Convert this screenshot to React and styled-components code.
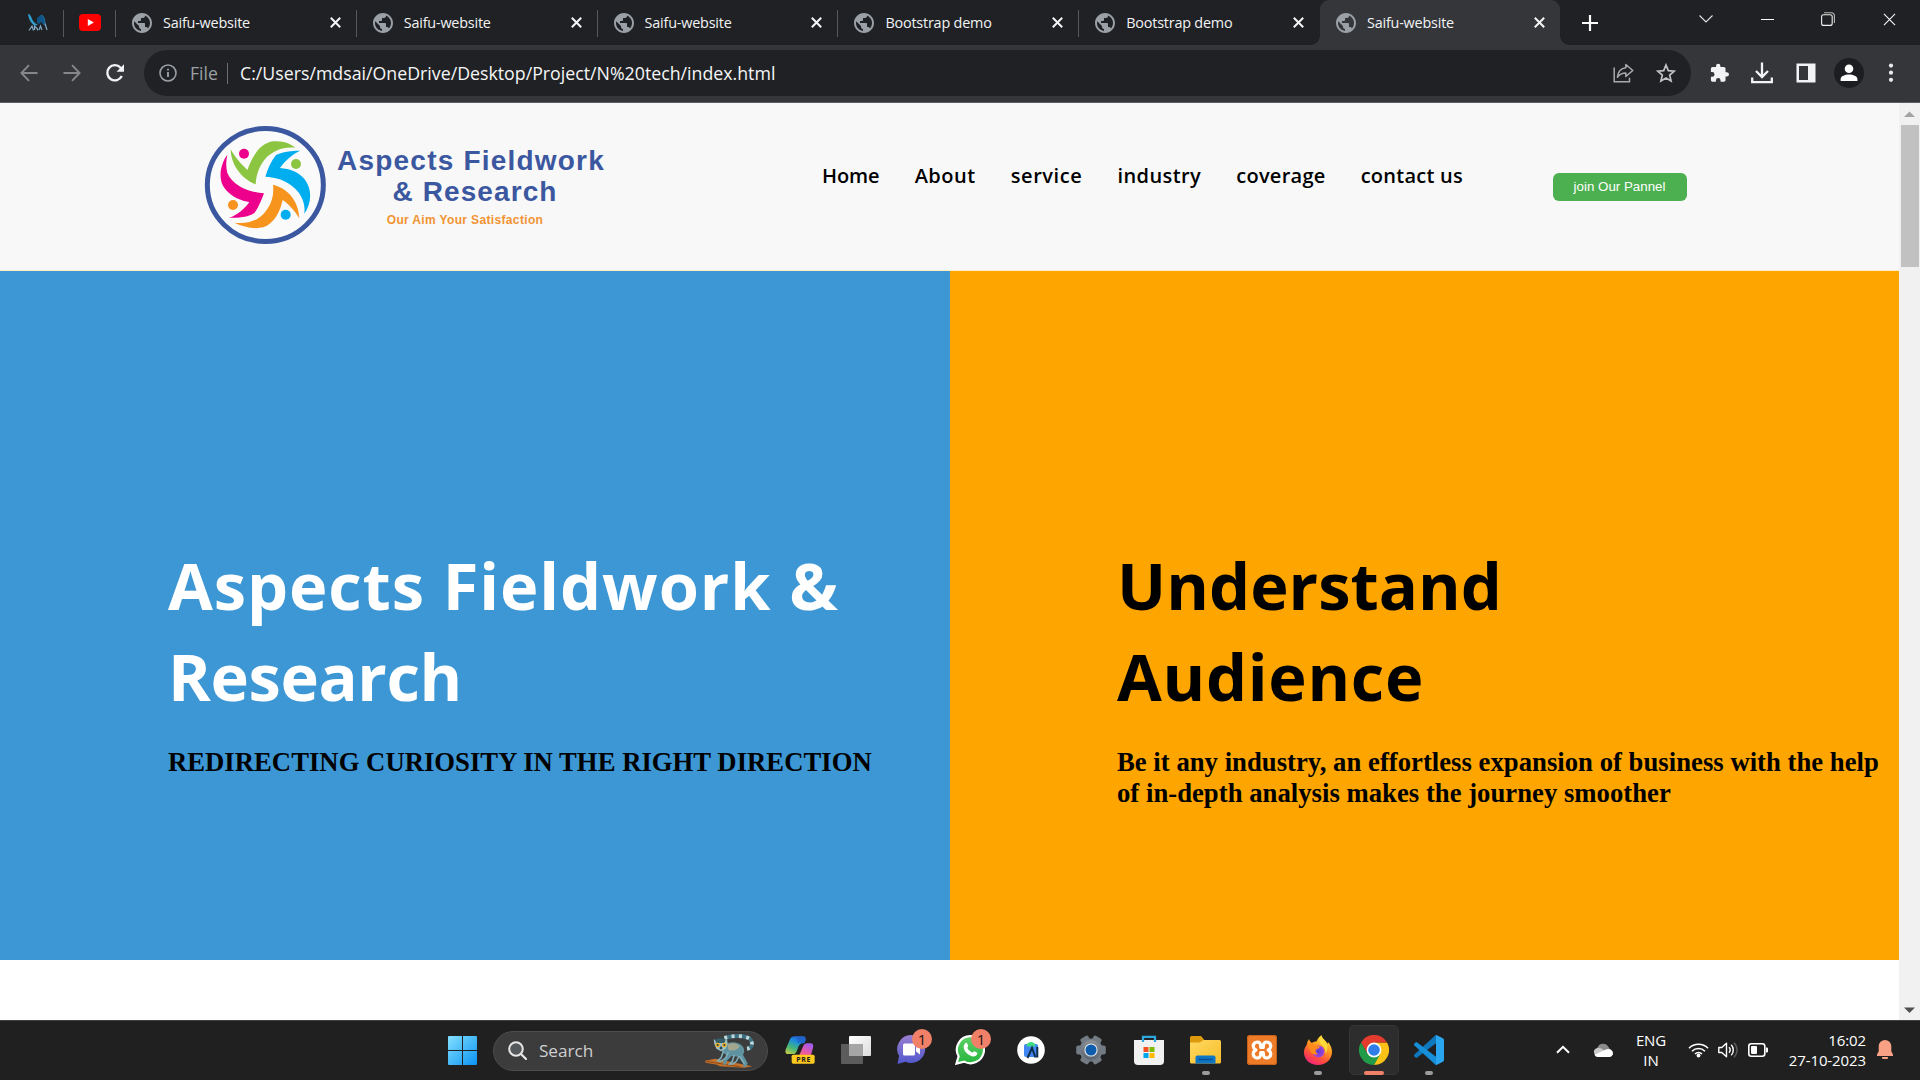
import React from "react";
import styled, { createGlobalStyle, css } from "styled-components";

const Global = createGlobalStyle`
  * { box-sizing: border-box; }
  body { margin: 0; overflow: hidden; background: #fff; }
  svg { display: block; flex: none; }
  h1, h2, p { margin: 0; }
`;

const ui = `"Open Sans", "Noto Sans", sans-serif`;

const Screen = styled.div`
  width: 1920px;
  height: 1080px;
  display: flex;
  flex-direction: column;
  overflow: hidden;
  font-family: ${ui};
`;

/* ---------- browser chrome ---------- */
const TabStrip = styled.div`
  height: 45px;
  flex: none;
  display: flex;
  background: #202124;
`;
const Pinned = styled.div`
  width: ${(p) => p.$w}px;
  padding-left: ${(p) => p.$pad}px;
  display: flex;
  align-items: center;
`;
const Divider = styled.i`
  width: 1px;
  height: 27px;
  margin-top: 10px;
  flex: none;
  background: #56585c;
  visibility: ${(p) => (p.$hidden ? "hidden" : "visible")};
`;
const Tab = styled.div`
  width: 239.8px;
  flex: none;
  display: flex;
  align-items: center;
  padding: 0 15px 0 16px;
  color: #f1f3f4;
  ${(p) =>
    p.$active &&
    css`
      position: relative;
      background: #35363a;
      border-radius: 9px 9px 0 0;
      &::before,
      &::after {
        content: "";
        position: absolute;
        bottom: 0;
        width: 9px;
        height: 9px;
      }
      &::before {
        left: -9px;
        background: radial-gradient(circle at 0 0, transparent 8.5px, #35363a 9px);
      }
      &::after {
        right: -9px;
        background: radial-gradient(circle at 100% 0, transparent 8.5px, #35363a 9px);
      }
    `}
`;
const TabTitle = styled.span`
  flex: 1;
  margin-left: 11px;
  font-size: 14.4px;
  line-height: 20px;
  letter-spacing: -0.2px;
  white-space: nowrap;
`;
const NewTab = styled.div`
  width: 60px;
  display: flex;
  align-items: center;
  justify-content: center;
`;
const WindowButtons = styled.div`
  margin-left: auto;
  padding: 0 0 7px;
  display: flex;
  align-items: center;
`;
const WindowButton = styled.div`
  width: 61.2px;
  display: flex;
  justify-content: center;
`;
const Toolbar = styled.div`
  height: 58px;
  flex: none;
  display: flex;
  align-items: center;
  background: #35363a;
  border-bottom: 1px solid #5d5e62;
  padding: 0 8px 1px 7px;
`;
const ToolButton = styled.div`
  width: ${(p) => p.$w || 43}px;
  flex: none;
  display: flex;
  justify-content: center;
`;
const Omnibox = styled.div`
  width: 1547px;
  height: 46px;
  flex: none;
  border-radius: 23px;
  background: #202124;
  display: flex;
  align-items: center;
  padding: 0 15px;
  margin: 0 6px 0 8px;
`;
const OmniboxActions = styled.div`
  display: flex;
  align-items: center;
  gap: 22px;
`;
const Scheme = styled.span`
  width: 37px;
  margin-left: 13px;
  font-size: 17.6px;
  color: #9aa0a6;
  line-height: 24px;
`;
const BarLine = styled.i`
  width: 1px;
  height: 21px;
  background: #6b6e72;
`;
const Url = styled.span`
  flex: 1;
  margin-left: 12px;
  font-size: 17.75px;
  line-height: 24px;
  color: #f5f6f7;
`;
const Avatar = styled.div`
  width: 30px;
  height: 30px;
  border-radius: 50%;
  background: #1c1d20;
  display: flex;
  align-items: center;
  justify-content: center;
`;

/* ---------- page ---------- */
const Viewport = styled.div`
  height: 917px;
  flex: none;
  display: flex;
`;
const Page = styled.main`
  width: 1899px;
  background: #fff;
`;
const SiteHeader = styled.header`
  height: 168px;
  display: flex;
  align-items: center;
  background: #f8f8f8;
  border-bottom: 1px solid #fdecc4;
  padding-left: 195px;
`;
const LogoMark = styled.div`
  margin-bottom: 4px;
`;
const LogoText = styled.div`
  width: 272px;
  display: flex;
  flex-direction: column;
  align-items: center;
  white-space: nowrap;
  font-family: "Liberation Sans", Arial, sans-serif;
  font-weight: 700;
  color: #3b57a0;
`;
const LogoLine = styled.div`
  font-size: 28px;
  line-height: 31px;
  letter-spacing: ${(p) => p.$ls}px;
  padding-left: ${(p) => p.$shift || 0}px;
`;
const Tagline = styled.div`
  margin: 6px 12px 0 0;
  font-size: 12px;
  line-height: 15px;
  letter-spacing: 0.35px;
  color: #f29332;
`;
const Nav = styled.nav`
  display: flex;
  gap: 35.2px;
  margin-left: 215px;
  margin-bottom: 22px;
`;
const NavItem = styled.a`
  font-size: 20px;
  font-weight: 600;
  line-height: 27px;
  letter-spacing: ${(p) => p.$ls}px;
  color: #000;
  white-space: nowrap;
`;
const JoinButton = styled.button`
  width: 134px;
  height: 28px;
  margin-left: 89.5px;
  padding: 0;
  border: 0;
  border-radius: 6px;
  background: #4caf50;
  color: #fff;
  font: 13.33px "Liberation Sans", Arial, sans-serif;
`;
const Hero = styled.section`
  height: 689px;
  display: flex;
`;
const Panel = styled.div`
  width: ${(p) => p.$w}px;
  padding: 269px 10px 0 ${(p) => p.$pad}px;
  background: ${(p) => p.$bg};
`;
const Headline = styled.h1`
  font-size: 65px;
  font-weight: 700;
  line-height: 91px;
  color: ${(p) => p.$color};
`;
const HeadLine = styled.span`
  display: block;
  white-space: nowrap;
  letter-spacing: ${(p) => p.$ls}px;
`;
const Sub = styled.h2`
  margin-top: 25px;
  font: 700 26.67px/31px "Liberation Serif", "Times New Roman", serif;
  letter-spacing: 0.03px;
  color: #000;
`;
const Scrollbar = styled.aside`
  width: 21px;
  background: #f1f1f1;
  display: flex;
  flex-direction: column;
  align-items: center;
  padding: 8px 0 7px;
`;
const Thumb = styled.div`
  width: 18px;
  height: 142px;
  margin-top: 8px;
  margin-bottom: auto;
  background: #c1c1c1;
`;

/* ---------- taskbar ---------- */
const Taskbar = styled.footer`
  height: 60px;
  flex: none;
  background: #202020;
  border-top: 1px solid #3d4140;
  display: flex;
  align-items: center;
  padding: 0 27px 0 434px;
`;
const Start = styled.div`
  width: 59px;
  padding-left: 14px;
`;
const SearchBox = styled.div`
  width: 275px;
  height: 40px;
  border-radius: 20px;
  background: #3c3c3c;
  border: 1px solid #4c4c4c;
  display: flex;
  align-items: center;
  padding: 0 12px 0 14px;
  margin-right: 3px;
`;
const SearchLabel = styled.span`
  flex: 1;
  margin-left: 12px;
  font-size: 17.2px;
  letter-spacing: -0.05px;
  line-height: 22px;
  color: #cfcfcf;
`;
const TaskApp = styled.div`
  width: ${(p) => p.$w || 56}px;
  height: 59px;
  margin-bottom: 2px;
  flex: none;
  position: relative;
  display: flex;
  align-items: center;
  justify-content: center;
`;
const ActiveTile = styled.div`
  width: 50px;
  height: 50px;
  border-radius: 5px;
  background: #2d2d2d;
  border: 1px solid #353535;
  display: flex;
  align-items: center;
  justify-content: center;
`;
const Indicator = styled.i`
  position: absolute;
  bottom: 4px;
  left: 50%;
  width: ${(p) => (p.$active ? 20 : 8)}px;
  height: 4px;
  transform: translateX(-50%);
  border-radius: 2px;
  background: ${(p) => (p.$active ? "#f08068" : "#9b9b9b")};
`;
const Badge = styled.b`
  position: absolute;
  top: 9px;
  left: 50%;
  margin-left: 1px;
  width: 20px;
  height: 20px;
  border-radius: 50%;
  background: #f08068;
  color: #1c1413;
  font-size: 15px;
  font-weight: 400;
  line-height: 20px;
  text-align: center;
`;
const Tray = styled.div`
  margin-left: auto;
  margin-bottom: 2px;
  display: flex;
  align-items: center;
  color: #fff;
`;
const TrayText = styled.div`
  width: ${(p) => p.$w}px;
  margin-left: ${(p) => p.$ml}px;
  font-size: 15px;
  letter-spacing: -0.1px;
  line-height: 20px;
  text-align: ${(p) => p.$align};
  white-space: nowrap;
`;
const TrayIcon = styled.div`
  margin-left: ${(p) => p.$ml || 0}px;
`;

/* ---------- drawings ---------- */
const Globe = () => (
  <svg width="20" height="20" viewBox="2 2 20 20">
    <path d="M12 2C6.48 2 2 6.48 2 12s4.480 10 10 10 10-4.480 10-10S17.520 2 12 2zm-1 17.930c-3.950-.49-7-3.850-7-7.930 0-.62.080-1.210.210-1.790L9 15v1c0 1.100.9 2 2 2v1.930zm6.900-2.540c-.26-.81-1-1.390-1.900-1.390h-1v-3c0-.55-.45-1-1-1H8v-2h2c.55 0 1-.45 1-1V7h2c1.100 0 2-.9 2-2v-.41c2.930 1.190 5 4.060 5 7.410 0 2.080-.8 3.970-2.100 5.390z" fill="#9aa0a6" />
  </svg>
);
const Close = ({ s = 11, w = 2 }) => (
  <svg width={s} height={s} viewBox="0 0 11 11">
    <path d="M.8.8l9.400 9.400M10.200.8L.8 10.200" stroke="#f5f5f5" strokeWidth={w} />
  </svg>
);
const PinnedArt = () => (
  <svg width="20" height="17" viewBox="0 0 20 17">
    <path d="M0 0c2 0 3 2 4 5 1.500 3 3 4.500 6 6l-3 .5C3 9.500 1 6 0 0z" fill="#2f9fd0" />
    <path d="M9 4l4-3 3 3 .5 8-3.500-4-2 2-2-1z" fill="#0f5488" />
    <path d="M13 1c3 1 4 5 4 10" fill="none" stroke="#1b6ea5" strokeWidth="1.200" />
    <path d="M1 16.500l3-4.500 1.500 4.500M6.500 16v-4l3 3v1.500M11 16l1.500-4 1.500 4M17 9.500l2 6.500" stroke="#7fa9c4" strokeWidth="1.200" fill="none" />
  </svg>
);
const YouTube = () => (
  <svg width="22" height="17" viewBox="0 0 22 17">
    <rect width="22" height="17" rx="4" fill="#f00" />
    <path d="M8.800 4.900v7.200l6-3.600z" fill="#fff" />
  </svg>
);
const Arrow = ({ flip }) => (
  <svg width="18" height="18" viewBox="0 0 18 18">
    <path
      d={flip ? "M.5 9h16M9 1.200L16.600 9 9 16.800" : "M17.500 9h-16M9 1.200L1.400 9 9 16.800"}
      fill="none" stroke="#85878a" strokeWidth="1.900"
    />
  </svg>
);
const Reload = () => (
  <svg width="20" height="20" viewBox="0 0 20 20">
    <path d="M16.800 13A7.600 7.600 0 1 1 15.600 4.700L17.500 6.800" fill="none" stroke="#f1f3f4" strokeWidth="2.400" />
    <path d="M19 1.300v7.500h-7.500z" fill="#f1f3f4" />
  </svg>
);
const Info = () => (
  <svg width="18" height="18" viewBox="0 0 18 18">
    <circle cx="9" cy="9" r="8" fill="none" stroke="#9aa0a6" strokeWidth="1.600" />
    <path d="M9 8v5M9 4.700v1.900" stroke="#9aa0a6" strokeWidth="1.900" />
  </svg>
);
const Share = () => (
  <svg width="21" height="20" viewBox="0 0 21 20">
    <path d="M1.200 4.500v14.300h15.300v-4" fill="none" stroke="#a7a9ac" strokeWidth="1.500" />
    <path d="M12.800 1.500l7 6-7 5.900V10C9 10 6.500 11.200 4.400 14.200 5 9 8 5.400 12.800 4.800z" fill="none" stroke="#a7a9ac" strokeWidth="1.500" strokeLinejoin="round" />
  </svg>
);
const Star = () => (
  <svg width="20" height="20" viewBox="0 0 20 20">
    <path d="M10 2l2.300 5.600 6 .5-4.600 4 1.400 5.900L10 14.900 4.900 18l1.400-5.900-4.600-4 6-.5z" fill="none" stroke="#c0c2c5" strokeWidth="1.700" />
  </svg>
);
const Puzzle = () => (
  <svg width="24" height="24" viewBox="0 0 24 24">
    <path d="M20.500 11H19V7c0-1.100-.9-2-2-2h-4V3.500a2.500 2.500 0 0 0-5 0V5H4c-1.100 0-2 .9-2 2v3.800h1.500a2.700 2.700 0 0 1 0 5.400H2V20c0 1.100.9 2 2 2h3.800v-1.500a2.700 2.700 0 0 1 5.400 0V22H17c1.100 0 2-.9 2-2v-4h1.500a2.500 2.500 0 0 0 0-5z" fill="#f1f3f4" transform="translate(2.200 1.800) scale(.86)" />
  </svg>
);
const Download = () => (
  <svg width="22" height="22" viewBox="0 0 22 22">
    <path d="M11 .5v14M5 9l6 6 6-6" fill="none" stroke="#f1f3f4" strokeWidth="2.300" />
    <path d="M1.200 15.500v4.700h19.600v-4.700" fill="none" stroke="#f1f3f4" strokeWidth="2.300" />
  </svg>
);
const SidePanel = () => (
  <svg width="20" height="20" viewBox="0 0 20 20">
    <path d="M.5.500h19v19H.5zM3 3v14h9V3z" fill="#f1f3f4" fillRule="evenodd" />
  </svg>
);
const Person = () => (
  <svg width="18" height="18" viewBox="0 0 18 18">
    <circle cx="9" cy="4.800" r="4.300" fill="#fff" />
    <path d="M.6 17v-2c0-3 4.500-4.500 8.400-4.500s8.400 1.500 8.400 4.500v2z" fill="#fff" />
  </svg>
);
const Dots = () => (
  <svg width="6" height="20" viewBox="0 0 6 20">
    {[2.6, 9.7, 16.8].map((y) => <circle key={y} cx="3" cy={y} r="2.100" fill="#e8eaed" />)}
  </svg>
);
const Caret = ({ down }) => (
  <svg width="11" height="6" viewBox="0 0 11 6">
    <path d={down ? "M0 .5h11L5.500 6z" : "M0 6h11L5.500.500z"} fill={down ? "#505050" : "#a3a3a3"} />
  </svg>
);
const Emblem = () => (
  <svg width="140" height="134" viewBox="0 0 420 402">
    <ellipse cx="211" cy="201" rx="174" ry="169.500" fill="#fafafb" stroke="#3b57a0" strokeWidth="15" />
    <path fill="#8cc541" d="M107 94C120 118 140 140 157 156C172 115 195 75 235 70C262 67 285 76 302 89C265 85 235 98 215 118C195 140 184 165 182 199C150 188 108 150 107 94Z" />
    <path fill="#00aeef" d="M315 98C290 98 262 101 243 111C228 130 217 155 211 176C255 178 290 195 312 225C325 245 331 265 328 287C350 255 352 215 330 185C312 162 285 152 255 150C270 128 290 110 315 98Z" />
    <path fill="#ec008c" d="M97 110C75 140 68 185 90 212C110 238 140 248 163 252C150 272 128 290 102 300C130 299 160 298 178 285C190 270 200 245 207 226C160 222 115 205 97 165C92 145 93 128 97 110Z" />
    <path fill="#f7941e" d="M234 200C275 210 311 245 313 301C297 275 280 258 263 246C255 280 240 315 205 328C175 335 145 326 118 314C150 318 180 312 203 290C228 265 238 235 234 200Z" />
    <circle cx="147" cy="107" r="15" fill="#ec008c" />
    <circle cx="303" cy="138" r="15" fill="#8cc541" />
    <circle cx="114" cy="261" r="15" fill="#f7941e" />
    <circle cx="272" cy="290" r="15" fill="#00aeef" />
  </svg>
);
const WindowsLogo = () => (
  <svg width="29" height="29" viewBox="0 0 29 29">
    <defs>
      <linearGradient id="win" x1="0" y1="0" x2="1" y2="1"><stop stopColor="#84e0ff" /><stop offset="1" stopColor="#0a93f2" /></linearGradient>
    </defs>
    <path d="M1 0h13v14H0V1a1 1 0 0 1 1-1zM15 0h13a1 1 0 0 1 1 1v13H15zM0 15h14v14H1a1 1 0 0 1-1-1zM15 15h14v13a1 1 0 0 1-1 1H15z" fill="url(#win)" />
  </svg>
);
const SearchGlyph = () => (
  <svg width="19" height="19" viewBox="0 0 19 19">
    <circle cx="8" cy="8" r="6.800" fill="#55595b" stroke="#e6e6e6" strokeWidth="2" />
    <path d="M13 13l5 5" stroke="#e6e6e6" strokeWidth="2.300" strokeLinecap="round" />
  </svg>
);
const Lemur = () => (
  <svg width="50" height="34" viewBox="0 0 150 102">
    <path d="M0 80L30 74 142 97 120 101 78 99 44 97 36 92 2 86z" fill="#c4712a" />
    <path d="M4 82l60 10 40 6" stroke="#8e4a17" strokeWidth="3" fill="none" />
    <path d="M58 12C85 4 118 4 134 14c12 12 8 28-8 30" fill="none" stroke="#3d7080" strokeWidth="12" />
    <path d="M58 12C85 4 118 4 134 14c12 12 8 28-8 30" fill="none" stroke="#c2d8da" strokeWidth="11" strokeDasharray="9 13" />
    <path d="M56 34C70 22 98 20 112 36c8 10 6 20 2 26l14 26-4 10h-10l2-8-16-22-20-2-14 14-4 12H54l2-10 8-18-14-12z" fill="#5f93a1" />
    <path d="M68 32c16-8 30-4 36 6-10 12-22 14-34 10z" fill="#a4a68e" />
    <path d="M56 50l-8 22-10 8 10 2 14-10 8-18M88 62L82 82l-8 8h10l10-8 8-16M104 66l14 24" stroke="#7facb6" strokeWidth="5" fill="none" />
    <path d="M26 16l8 4c8-3 16-3 24 0l8-6 2 16-6 14-14 8-14-8-6-14z" fill="#9fc0c3" />
    <path d="M30 17c10-6 22-6 32 0l-4 10H34z" fill="#345c69" />
    <circle cx="38" cy="33" r="7" fill="#e9b227" /><circle cx="58" cy="33" r="7" fill="#e9b227" />
    <circle cx="38" cy="33" r="3" fill="#303c3f" /><circle cx="58" cy="33" r="3" fill="#303c3f" />
    <path d="M43 42l5-6 5 6-5 5z" fill="#27454f" />
  </svg>
);
const Copilot = () => (
  <svg width="30" height="28" viewBox="0 0 90 84">
    <defs>
      <linearGradient id="cpA" x1="0" y1="1" x2=".5" y2="0"><stop stopColor="#d9cf3f" /><stop offset=".4" stopColor="#46b878" /><stop offset=".8" stopColor="#1a8be0" /><stop offset="1" stopColor="#2a64d8" /></linearGradient>
      <linearGradient id="cpB" x1="0" y1="1" x2=".6" y2="0"><stop stopColor="#f2685f" /><stop offset=".5" stopColor="#e858a8" /><stop offset="1" stopColor="#a45be8" /></linearGradient>
    </defs>
    <path d="M14 12C17 4 22 1 32 1h22c6 0 9 5 8 11l-4 10c-12-2-16 4-20 16-4 14-8 16-16 16H10C0 54 0 46 3 38z" fill="url(#cpA)" />
    <path d="M34 1h20c6 0 9 5 8 12l-4 8H38z" fill="#1c62c4" opacity=".65" />
    <path d="M76 22c8 0 10 6 8 14L76 64H40l14-32c3-7 7-10 13-10z" fill="url(#cpB)" />
    <rect x="20" y="56" width="69" height="27" rx="5" fill="#ffc91f" />
    <text x="56" y="77" fontSize="21" fontWeight="700" letterSpacing="2" textAnchor="middle" fontFamily="Open Sans, sans-serif" fill="#1b1b1b">PRE</text>
  </svg>
);
const TaskView = () => (
  <svg width="30" height="28" viewBox="0 0 30 28">
    <defs><linearGradient id="tv" x1="0" y1="0" x2="1" y2="1"><stop stopColor="#fff" /><stop offset="1" stopColor="#dcdcdc" /></linearGradient></defs>
    <rect x="0" y="8" width="22" height="20" rx="1" fill="#5c5c5c" />
    <rect x="8" y="0" width="22" height="20" rx="1" fill="url(#tv)" />
    <path d="M8 8h14v12H8z" fill="#a5a5a5" />
  </svg>
);
const Chat = () => (
  <svg width="29" height="29" viewBox="0 0 29 29">
    <defs><linearGradient id="ch" x1="0" y1="0" x2="0" y2="1"><stop stopColor="#9a7fd0" /><stop offset="1" stopColor="#5158cc" /></linearGradient></defs>
    <path d="M14.500 0a14 14 0 1 1-6 26.800L.5 29l1.600-8A14 14 0 0 1 14.500 0z" fill="url(#ch)" />
    <rect x="6" y="8.500" width="12" height="12" rx="1.500" fill="#fff" />
    <path d="M19 12.500l4-3v10l-4-3z" fill="#fff" />
  </svg>
);
const WhatsApp = () => (
  <svg width="30" height="30" viewBox="0 0 30 30">
    <defs><linearGradient id="wa" x1="0" y1="0" x2="0" y2="1"><stop stopColor="#5fd168" /><stop offset="1" stopColor="#25b43e" /></linearGradient></defs>
    <path d="M15.500 1.200a13.500 13.500 0 1 1-6.400 25.400L1.500 28.600l2.100-7.300A13.500 13.500 0 0 1 15.500 1.200z" fill="url(#wa)" stroke="#fff" strokeWidth="2.200" />
    <path d="M10.200 8.200c.8-.8 1.600-.5 2 .3l1 2.300c.3.700-1 1.800-.8 2.300 1 2 2.600 3.500 4.700 4.400.7.200 1.600-1.600 2.300-1.300l2.400 1.200c.7.400.7 1.200.2 2.100-1 1.700-3 2.300-5 1.700-4.300-1.300-7-4-8.100-7.400-.6-2 0-4.200 1.300-5.600z" fill="#fff" />
  </svg>
);
const AndroidStudio = () => (
  <svg width="28" height="28" viewBox="0 0 28 28">
    <circle cx="14" cy="14" r="13.800" fill="#fff" />
    <rect x="7" y="8" width="14" height="13" rx="2" fill="#4285f4" />
    <path d="M9.500 10.500a4.500 4.500 0 0 1 9 0z" fill="#3ddc84" />
    <path d="M10.500 22l4.500-10 3.500 9.500M20.300 11v10.500" stroke="#0e2f4a" strokeWidth="2" fill="none" />
  </svg>
);
const Gear = () => (
  <svg width="30" height="30" viewBox="0 0 30 30">
    <defs><linearGradient id="gr" x1="0" y1="0" x2="0" y2="1"><stop stopColor="#8b9095" /><stop offset="1" stopColor="#5b6470" /></linearGradient></defs>
    <circle cx="15" cy="15" r="11.600" fill="#737b84" />
    {[0, 60, 120].map((a) => <rect key={a} x="10.500" y=".2" width="9" height="29.600" rx="2" fill="#737b84" transform={`rotate(${a + 30} 15 15)`} />)}
    <circle cx="15" cy="15" r="10" fill="url(#gr)" />
    <circle cx="15" cy="15" r="6.600" fill="#e2e6ea" />
    <circle cx="15" cy="15" r="5.500" fill="#0d5cad" />
  </svg>
);
const Store = () => (
  <svg width="30" height="30" viewBox="0 0 30 30">
    <path d="M9 7V1.800h12V7" fill="none" stroke="#2ea7df" strokeWidth="2.300" />
    <path d="M0 5h30v21a4 4 0 0 1-4 4H4a4 4 0 0 1-4-4z" fill="#f1f1f1" />
    <path d="M9 7V5M21 7V5" stroke="#2ea7df" strokeWidth="2.300" />
    <path d="M9.500 12h5v5h-5z" fill="#f25022" /><path d="M15.500 12h5v5h-5z" fill="#7fba00" />
    <path d="M9.500 18h5v5h-5z" fill="#00a4ef" /><path d="M15.500 18h5v5h-5z" fill="#ffb900" />
  </svg>
);
const Explorer = () => (
  <svg width="31" height="28" viewBox="0 0 31 28">
    <defs><linearGradient id="fx" x1="0" y1="0" x2="1" y2="1"><stop stopColor="#ffd960" /><stop offset="1" stopColor="#f7bd2c" /></linearGradient></defs>
    <path d="M1.500 0H11l3 3.500V10H0V1.500A1.500 1.500 0 0 1 1.500 0z" fill="#dd9a0c" />
    <path d="M0 6.500h10L13.500 4h16A1.500 1.500 0 0 1 31 5.500V26a1.500 1.500 0 0 1-1.500 1.500h-28A1.500 1.500 0 0 1 0 26z" fill="url(#fx)" />
    <path d="M5.500 27.500v-6a2 2 0 0 1 2-2h16a2 2 0 0 1 2 2v6z" fill="#0f76c6" />
    <path d="M9 23.500h13" stroke="#0a4f91" strokeWidth="1.500" strokeLinecap="round" />
  </svg>
);
const Xampp = () => (
  <svg width="30" height="30" viewBox="0 0 30 30">
    <rect width="30" height="30" rx="3" fill="#ed7b28" />
    <rect x=".5" y=".5" width="29" height="29" rx="3" fill="none" stroke="#c45f18" />
    <path d="M8.500 7.500c3.600-1.600 5.500 1 5.200 5h2.600c-.3-4 1.600-6.600 5.200-5 3.500 1.800 2.500 6-.3 7.500 2.800 1.500 3.800 5.700.3 7.500-3.600 1.600-5.500-1-5.200-5h-2.600c.3 4-1.600 6.600-5.200 5C5 20.700 6 16.500 8.800 15 6 13.500 5 9.300 8.500 7.500z" fill="none" stroke="#fff" strokeWidth="3.200" strokeLinejoin="round" />
  </svg>
);
const Firefox = () => (
  <svg width="28" height="30" viewBox="0 0 28 30">
    <defs>
      <linearGradient id="ff" x1=".8" y1="0" x2=".3" y2="1"><stop stopColor="#fff04a" /><stop offset=".4" stopColor="#ff9d1c" /><stop offset=".75" stopColor="#ff4a40" /><stop offset="1" stopColor="#f0247a" /></linearGradient>
      <radialGradient id="fp"><stop stopColor="#5a3bd0" /><stop offset="1" stopColor="#a845d8" /></radialGradient>
    </defs>
    <path d="M5 4c.5 2 1.500 3.300 3 4 1-1 2.500-1.500 4.500-1.500C13.500 4 15 2 17.500.300 17.800 4 22 5 23.500 9l.5-2c3 3.500 4 7 4 10 0 7-6 13-14 13S0 24.500 0 17.500C0 13 2.500 11 3 9c.2-2 1-3.500 2-5z" fill="url(#ff)" />
    <circle cx="14.500" cy="16.500" r="6" fill="url(#fp)" />
    <path d="M4 10c3-2 6-1 7.500.5 1 .8 3 .8 4.500 1-.5 2-3 2-4 3-1 1.800 0 3.500 2 4.500-3 1.500-7 0-8-3.500" fill="#ff8a1c" />
    <path d="M17.500.300C17.800 4 22 5 23 10c1 4 0 6.500-1.500 8.500.5-5-2-7-4.500-9-2-2-2.500-6 .5-9.200z" fill="#ffd83a" />
  </svg>
);
const Chrome = () => (
  <svg width="30" height="30" viewBox="0 0 30 30">
    <path d="M15 15h7L15 30A15 15 0 0 0 28 7.500H15z" fill="#fbc116" />
    <path d="M2 7.500A15 15 0 0 1 28 7.500H15L8.500 18.700z" fill="#e33b2e" />
    <path d="M2 7.500l6.500 11.200L15 22.500l6.500-3.800L15 30A15 15 0 0 1 2 7.500z" fill="#229b48" />
    <circle cx="15" cy="15" r="7.400" fill="#fff" />
    <circle cx="15" cy="15" r="5.800" fill="#2f7de9" />
  </svg>
);
const VSCode = () => (
  <svg width="30" height="30" viewBox="0 0 30 30">
    <path d="M22 8.300L3.200 22.600a1.300 1.300 0 0 1-1.600 0L.4 21.400a1.200 1.200 0 0 1 0-1.800L20.300 1.200A2.500 2.500 0 0 1 22 .4z" fill="#0f77bb" />
    <path d="M22 21.700L3.200 7.400a1.300 1.300 0 0 0-1.600 0L.4 8.600a1.200 1.200 0 0 0 0 1.800L20.300 28.800a2.500 2.500 0 0 0 1.700.8z" fill="#168fd8" />
    <path d="M21.300.300c.5-.3 1-.3 1.600 0l6 2.900A2 2 0 0 1 30 5v20a2 2 0 0 1-1.100 1.800l-6 2.900c-.6.3-1.100.3-1.600 0 .5-.3.700-.8.7-1.400V1.700c0-.6-.2-1.100-.7-1.400z" fill="#2aa5f0" />
  </svg>
);
const TrayChevron = () => (
  <svg width="14" height="9" viewBox="0 0 14 9"><path d="M1 7.800l6-6 6 6" fill="none" stroke="#fff" strokeWidth="2" /></svg>
);
const Cloud = () => (
  <svg width="20" height="14" viewBox="0 0 20 14">
    <path d="M4.500 4.500A6 6 0 0 1 15.500 4L18 8 4 10z" fill="#8b8b8b" />
    <path d="M3 5.500c3-1.500 5-.5 8 2L5 13a4 4 0 0 1-2-7.500z" fill="#c9c9c9" />
    <path d="M2 11.500L13 6.500c3-1.500 7 0 7 3.800 0 2-1.500 3.700-3.500 3.700h-12C3 14 2 13 1.500 11.500z" fill="#fff" />
  </svg>
);
const Wifi = () => (
  <svg width="21" height="16" viewBox="0 0 21 16">
    <path d="M1 6.200a13.500 13.500 0 0 1 19 0M4 9.200a9.300 9.300 0 0 1 13 0M7 12a5 5 0 0 1 7 0" fill="none" stroke="#fff" strokeWidth="1.600" />
    <circle cx="10.500" cy="13.500" r="1.900" fill="#fff" />
  </svg>
);
const Speaker = () => (
  <svg width="20" height="16" viewBox="0 0 20 16">
    <path d="M.8 5.500h3L8.500 1.300v13.400L3.800 10.500h-3z" fill="none" stroke="#fff" strokeWidth="1.400" strokeLinejoin="round" />
    <path d="M11 5.300a4 4 0 0 1 0 5.400M13.200 2.800a7.500 7.500 0 0 1 0 10.400" fill="none" stroke="#fff" strokeWidth="1.400" />
    <path d="M16 .8c4 4 4 10.400 0 14.400" fill="none" stroke="#5c5c5c" strokeWidth="1.400" />
  </svg>
);
const Battery = () => (
  <svg width="20" height="14" viewBox="0 0 20 14">
    <rect x=".8" y=".8" width="16" height="12.400" rx="2.500" fill="none" stroke="#fff" strokeWidth="1.600" />
    <rect x="3" y="3" width="6" height="8" rx="1" fill="#fff" />
    <path d="M18 4.500h1a1 1 0 0 1 1 1v3a1 1 0 0 1-1 1h-1z" fill="#fff" />
  </svg>
);
const Bell = () => (
  <svg width="16" height="19" viewBox="0 0 16 19">
    <path d="M8 0a6.300 6.300 0 0 1 6.300 6.300v5L16 14.600V16H0v-1.400l1.700-3.300v-5A6.300 6.300 0 0 1 8 0zM5 17h6a3 3 0 0 1-6 0z" fill="#f9a184" />
  </svg>
);

const tabs = ["Saifu-website", "Saifu-website", "Saifu-website", "Bootstrap demo", "Bootstrap demo", "Saifu-website"];
const nav = [["Home", -0.1], ["About", 0.5], ["service", 0.55], ["industry", 0.4], ["coverage", 0.25], ["contact us", 0.25]];
const apps = [
  { Icon: Copilot, w: 57 },
  { Icon: TaskView, w: 55 },
  { Icon: Chat, w: 56, badge: 1 },
  { Icon: WhatsApp, w: 62, badge: 1 },
  { Icon: AndroidStudio, w: 60 },
  { Icon: Gear, w: 60 },
  { Icon: Store },
  { Icon: Explorer, w: 57, open: true },
  { Icon: Xampp },
  { Icon: Firefox, open: true },
  { Icon: Chrome, open: true, active: true },
  { Icon: VSCode, w: 54, open: true },
];

export default function App() {
  return (
    <Screen>
      <Global />
      <TabStrip>
        <Pinned $w={63} $pad={28}><PinnedArt /></Pinned>
        <Divider />
        <Pinned $w={51} $pad={15}><YouTube /></Pinned>
        {tabs.map((title, i) => (
          <React.Fragment key={i}>
            <Divider $hidden={i === 5} />
            <Tab $active={i === 5}>
              <Globe />
              <TabTitle>{title}</TabTitle>
              <Close />
            </Tab>
          </React.Fragment>
        ))}
        <NewTab>
          <svg width="16" height="16" viewBox="0 0 16 16"><path d="M8 0v16M0 8h16" stroke="#fff" strokeWidth="2.200" /></svg>
        </NewTab>
        <WindowButtons>
          <WindowButton>
            <svg width="14" height="8" viewBox="0 0 14 8"><path d="M.5.500L7 7 13.500.500" fill="none" stroke="#e4e4e4" strokeWidth="1.100" /></svg>
          </WindowButton>
          <WindowButton>
            <svg width="13" height="2" viewBox="0 0 13 2"><path d="M0 1.500h13" stroke="#fff" /></svg>
          </WindowButton>
          <WindowButton>
            <svg width="14" height="14" viewBox="0 0 14 14"><rect x=".6" y="2.800" width="10.600" height="10.600" rx="2" fill="none" stroke="#eee" strokeWidth="1.100" /><path d="M3 .7h7.500a2.900 2.900 0 0 1 2.900 2.900V11" fill="none" stroke="#bbb" strokeWidth="1.100" /></svg>
          </WindowButton>
          <WindowButton><Close s={13} w={0.95} /></WindowButton>
        </WindowButtons>
      </TabStrip>
      <Toolbar>
        <ToolButton><Arrow /></ToolButton>
        <ToolButton><Arrow flip /></ToolButton>
        <ToolButton><Reload /></ToolButton>
        <Omnibox>
          <Info />
          <Scheme>File</Scheme>
          <BarLine />
          <Url>C:/Users/mdsai/OneDrive/Desktop/Project/N%20tech/index.html</Url>
          <OmniboxActions>
            <Share />
            <Star />
          </OmniboxActions>
        </Omnibox>
        <ToolButton><Puzzle /></ToolButton>
        <ToolButton $w={44}><Download /></ToolButton>
        <ToolButton><SidePanel /></ToolButton>
        <ToolButton><Avatar><Person /></Avatar></ToolButton>
        <ToolButton $w={42}><Dots /></ToolButton>
      </Toolbar>
      <Viewport>
        <Page>
          <SiteHeader>
            <LogoMark><Emblem /></LogoMark>
            <LogoText>
              <LogoLine $ls={1.2}>Aspects Fieldwork</LogoLine>
              <LogoLine $ls={1.1} $shift={8}>&amp; Research</LogoLine>
              <Tagline>Our Aim Your Satisfaction</Tagline>
            </LogoText>
            <Nav>
              {nav.map(([label, ls]) => <NavItem key={label} $ls={ls}>{label}</NavItem>)}
            </Nav>
            <JoinButton>join Our Pannel</JoinButton>
          </SiteHeader>
          <Hero>
            <Panel $w={950} $pad={168} $bg="#3c97d4">
              <Headline $color="#fff">
                <HeadLine $ls={0.9}>Aspects Fieldwork &amp;</HeadLine>
                <HeadLine $ls={-0.4}>Research</HeadLine>
              </Headline>
              <Sub>REDIRECTING CURIOSITY IN THE RIGHT DIRECTION</Sub>
            </Panel>
            <Panel $w={949} $pad={167} $bg="#ffa500">
              <Headline $color="#000">
                <HeadLine $ls={0.05}>Understand</HeadLine>
                <HeadLine $ls={0.7}>Audience</HeadLine>
              </Headline>
              <Sub>Be it any industry, an effortless expansion of business with the help of in-depth analysis makes the journey smoother</Sub>
            </Panel>
          </Hero>
        </Page>
        <Scrollbar>
          <Caret />
          <Thumb />
          <Caret down />
        </Scrollbar>
      </Viewport>
      <Taskbar>
        <Start><WindowsLogo /></Start>
        <SearchBox>
          <SearchGlyph />
          <SearchLabel>Search</SearchLabel>
          <Lemur />
        </SearchBox>
        {apps.map(({ Icon, w, badge, open, active }, i) => (
          <TaskApp key={i} $w={w}>
            {active ? <ActiveTile><Icon /></ActiveTile> : <Icon />}
            {badge && <Badge>{badge}</Badge>}
            {open && <Indicator $active={active} />}
          </TaskApp>
        ))}
        <Tray>
          <TrayChevron />
          <TrayIcon $ml={23}><Cloud /></TrayIcon>
          <TrayText $w={40} $ml={18} $align="center">ENG<br />IN</TrayText>
          <TrayIcon $ml={17}><Wifi /></TrayIcon>
          <TrayIcon $ml={9}><Speaker /></TrayIcon>
          <TrayIcon $ml={10}><Battery /></TrayIcon>
          <TrayText $w={80} $ml={18} $align="right">16:02<br />27-10-2023</TrayText>
          <TrayIcon $ml={11}><Bell /></TrayIcon>
        </Tray>
      </Taskbar>
    </Screen>
  );
}
